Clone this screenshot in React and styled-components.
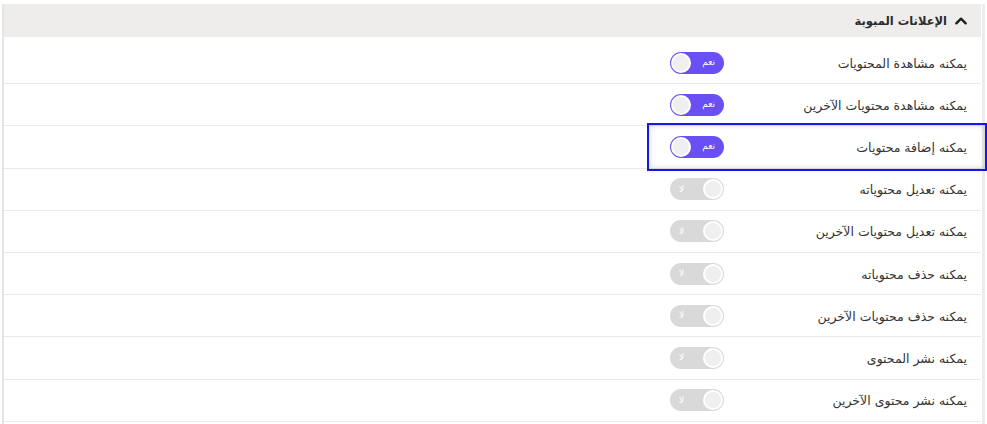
import styled, { createGlobalStyle } from 'styled-components';

const GlobalStyle = createGlobalStyle`
  html, body {
    margin: 0;
    padding: 0;
    background: #ffffff;
    font-family: "DejaVu Sans", "Noto Sans", sans-serif;
  }
`;

const Page = styled.div`
  width: 987px;
  height: 424px;
  box-sizing: border-box;
  padding: 4px 2px 0 2px;
  overflow: hidden;
`;

const Panel = styled.div`
  position: relative;
  direction: rtl;
  border-left: 2px solid #e6e6e6;
  border-right: 3px solid #ececec;
  height: 420px;
  box-sizing: border-box;
`;

const Header = styled.div`
  display: flex;
  align-items: center;
  gap: 6px;
  height: 33px;
  background: #eeedeb;
  padding-right: 12px;
  margin-right: 1px;
  margin-bottom: 5px;
  font-size: 11.5px;
  font-weight: bold;
  color: #2b2b2b;
`;

const Row = styled.div`
  display: flex;
  align-items: center;
  height: 41.2px;
  border-bottom: 1px solid #e9e9e9;
  margin-right: 1px;
  padding-right: 14px;
`;

const Label = styled.div`
  width: 243px;
  font-size: 12.5px;
  color: #333333;
  white-space: nowrap;
  padding-top: 1px;
`;

const Track = styled.div`
  display: flex;
  flex-direction: ${(p) => (p.$on ? 'row' : 'row-reverse')};
  align-items: center;
  justify-content: space-between;
  box-sizing: border-box;
  width: 54px;
  height: 22px;
  border-radius: 11px;
  padding: 0 1px;
  background: ${(p) => (p.$on ? '#6a4ff5' : '#d9d9d9')};
`;

const TrackText = styled.span`
  font-size: 9px;
  color: #ffffff;
  padding: 0 8px;
  line-height: 1;
`;

const Knob = styled.span`
  width: 20px;
  height: 20px;
  border-radius: 50%;
  box-sizing: border-box;
  border: 2px solid #ffffff;
  background: #efefef;
`;

const Highlight = styled.div`
  position: absolute;
  top: 119px;
  right: -5px;
  width: 340px;
  height: 48px;
  box-sizing: border-box;
  border: 2px solid #1616e6;
  box-shadow: inset 0 0 6px rgba(0, 0, 0, 0.18);
  pointer-events: none;
`;

const Chevron = () => (
  <svg width="16" height="16" viewBox="0 0 24 24" fill="none" stroke="#1f1f1f" strokeWidth="3.6" strokeLinecap="round" strokeLinejoin="round">
    <path d="M5 15.5l7-7 7 7" />
  </svg>
);

const rows = [
  ['يمكنه مشاهدة المحتويات', true],
  ['يمكنه مشاهدة محتويات الآخرين', true],
  ['يمكنه إضافة محتويات', true],
  ['يمكنه تعديل محتوياته', false],
  ['يمكنه تعديل محتويات الآخرين', false],
  ['يمكنه حذف محتوياته', false],
  ['يمكنه حذف محتويات الآخرين', false],
  ['يمكنه نشر المحتوى', false],
  ['يمكنه نشر محتوى الآخرين', false],
];

function Toggle({ on }) {
  return (
    <Track $on={on}>
      <TrackText>{on ? 'نعم' : 'لا'}</TrackText>
      <Knob />
    </Track>
  );
}

export default function App() {
  return (
    <>
      <GlobalStyle />
      <Page>
        <Panel>
          <Header>
            <Chevron />
            <span>الإعلانات المبوبة</span>
          </Header>
          {rows.map(([label, on]) => (
            <Row key={label}>
              <Label>{label}</Label>
              <Toggle on={on} />
            </Row>
          ))}
          <Highlight />
        </Panel>
      </Page>
    </>
  );
}
